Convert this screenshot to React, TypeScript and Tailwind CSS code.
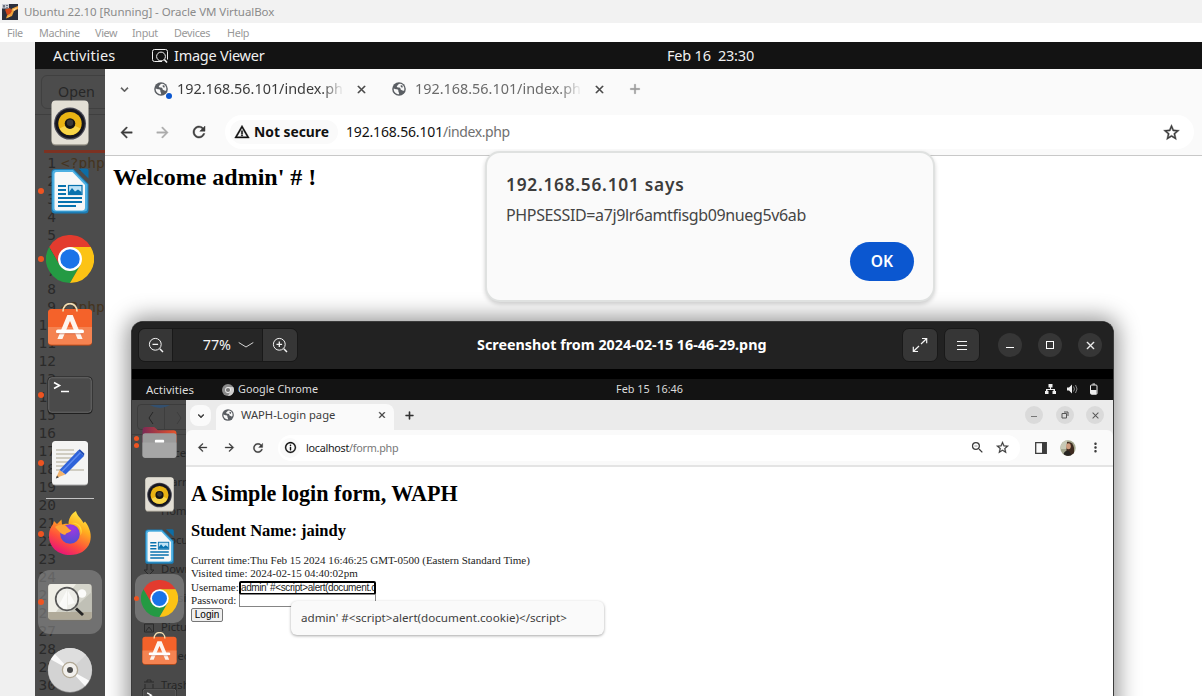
import React from 'react';
import {
  MdAdd,
  MdArrowBack,
  MdArrowForward,
  MdClose,
  MdExpandMore,
  MdInfoOutline,
  MdMoreVert,
  MdRefresh,
  MdStarBorder,
  MdWarningAmber,
  MdZoomOut,
} from 'react-icons/md';

type IconProps = { className?: string };

const SpeakerIcon = ({ className }: IconProps) => (
  <svg viewBox="0 0 48 48" className={className}>
    <rect x="5.6" y="2" width="36.8" height="44.5" rx="4" fill="#9b978c" />
    <rect x="5.6" y="1.6" width="36.8" height="43.6" rx="4" fill="#e3dfd5" />
    <circle cx="24" cy="24.6" r="16" fill="#4a4a56" />
    <circle cx="24" cy="24.6" r="14.8" fill="#16161f" />
    <circle cx="24" cy="24.6" r="11.7" fill="#e9b313" />
    <path d="M13.5 29.5a11.7 11.7 0 0 0 21 0L24 24.6z" fill="#f8d548" />
    <circle cx="24" cy="24.6" r="5.3" fill="#141414" />
    <circle cx="24" cy="23.8" r="3.2" fill="#383838" />
  </svg>
);

const WriterIcon = ({ className }: IconProps) => (
  <svg viewBox="0 0 48 48" className={className}>
    <path d="M9 2h18.500L42.500 17v26a3.500 3.500 0 0 1-3.500 3.500H9A3.500 3.500 0 0 1 5.500 43V5.500A3.500 3.500 0 0 1 9 2z" fill="#1c7db5" />
    <path d="M9.500 3H27l14.500 14.500V41a3.500 3.500 0 0 1-3.500 3.500H9.500A3.500 3.500 0 0 1 6.300 41V6.500A3.500 3.500 0 0 1 9.500 3z" fill="#4fb0e2" />
    <path d="M10.500 5h16L39 18v22.500a3 3 0 0 1-3 3H10.500a2 2 0 0 1-2-2V7a2 2 0 0 1 2-2z" fill="#f8f8f8" />
    <path d="M32.500 1.500h8a2 2 0 0 1 2 2v8z" fill="#0d6da5" />
    <path d="M12 19h8M12 23h8M12 27h8M12 31h24M12 35h24M12 39h18" stroke="#0872ae" strokeWidth="2" />
    <rect x="22.500" y="18.500" width="13.500" height="9" fill="#bfe2f5" stroke="#0872ae" strokeWidth="1.200" />
    <path d="M23 27v-2l3-4 3 3.500 3-2 3.500 2.500v2z" fill="#0872ae" />
  </svg>
);

const ChromeIcon = ({ className }: IconProps) => (
  <svg viewBox="0 0 48 48" className={className}>
    <path d="M24 12h20.800A24 24 0 0 0 3.200 12L13.600 30z" fill="#e33b2e" />
    <path d="M13.600 30 3.200 12A24 24 0 0 0 24 48l10.400-18z" fill="#249a43" />
    <path d="M34.400 30 24 48A24 24 0 0 0 44.800 12H24z" fill="#fcc314" />
    <circle cx="24" cy="24" r="12" fill="#fff" />
    <circle cx="24" cy="24" r="9.700" fill="#1a73e8" />
  </svg>
);

const SoftwareIcon = ({ className }: IconProps) => (
  <svg viewBox="0 0 48 48" className={className}>
    <rect x="2" y="6.500" width="44" height="36.200" rx="3.500" fill="#a94a20" />
    <rect x="2" y="6" width="44" height="35.500" rx="3.500" fill="#f4622a" />
    <path d="M2 24h44v14a3.500 3.500 0 0 1-3.500 3.500h-37A3.500 3.500 0 0 1 2 38z" fill="#f58351" />
    <path d="M17 8.500c0-10.500 14-10.500 14 0" fill="none" stroke="#f3ddb0" strokeWidth="1.700" />
    <path d="M21.300 12h5.400L36.600 36h-5L24 18 16.400 36h-5z" fill="#fdf4ee" />
    <rect x="10" y="26.500" width="28" height="3.800" rx="1.900" fill="#fff" />
    <path d="M11 30.800h26" stroke="#c9694a" strokeWidth=".7" />
  </svg>
);

const TerminalIcon = ({ className }: IconProps) => (
  <svg viewBox="0 0 48 48" className={className}>
    <rect x="1.500" y="5.500" width="45" height="37.500" rx="4.200" fill="#202020" />
    <rect x="2.700" y="6.700" width="42.600" height="34.600" rx="3" fill="#4a4a4a" stroke="#777" strokeWidth=".8" />
    <path d="M8 11.500l5.500 3-5.500 3" fill="none" stroke="#fff" strokeWidth="1.600" />
    <path d="M15 20.500h8" stroke="#fff" strokeWidth="1.500" />
  </svg>
);

const EditorIcon = ({ className }: IconProps) => (
  <svg viewBox="0 0 48 48" className={className}>
    <rect x="6" y="2.600" width="36" height="44" rx="3.500" fill="#aaa" />
    <rect x="6" y="2" width="36" height="43.500" rx="3.500" fill="#f4f4f3" />
    <path d="M10 11h18M10 15h21M10 19h19M10 23h15M10 27h12M10 31h28" stroke="#c3c0b2" strokeWidth="1.700" />
    <path d="M13.500 31 32 11.500l6 5.500-18.500 18.500z" fill="#2e62d9" />
    <path d="m32 11.500 1.800-1.300 4.500 4.300-.3 2.500z" fill="#204bb4" />
    <path d="m15.500 33 19-19.500" stroke="#5d8bf0" strokeWidth="1.500" />
    <path d="M13.500 31 10 39l9.500-3.500z" fill="#f2b46d" />
    <path d="m11 36.500-1.200 2.900 3-1z" fill="#444" />
  </svg>
);

const FirefoxIcon = ({ className }: IconProps) => (
  <svg viewBox="0 0 48 48" className={className}>
    <defs>
      <linearGradient id="fxBody" x1=".8" y1="0" x2=".3" y2="1">
        <stop offset="0" stopColor="#fff14a" />
        <stop offset=".35" stopColor="#ffae1f" />
        <stop offset=".7" stopColor="#ff4f3b" />
        <stop offset="1" stopColor="#e6127a" />
      </linearGradient>
      <radialGradient id="fxGlobe" cx=".6" cy=".2" r=".8">
        <stop offset="0" stopColor="#a436e0" />
        <stop offset="1" stopColor="#4f4fd0" />
      </radialGradient>
    </defs>
    <path d="M30 1c1 5 5 7 7.500 12l1.500-1.500c5 6 7 14 5 20.500-3 9-11 13-20 13C12 45 3 37 3 26c0-6 2-9 4-12l1-3 3 3 4.500-4.500.5 5c3-1 4-1 6.500-.5 0-5 2.500-10 7.500-13z" fill="url(#fxBody)" />
    <circle cx="24" cy="24" r="9.800" fill="url(#fxGlobe)" />
    <path d="M9 17c4-3 10-3 13 1l1.500 1.500c2 .5 2.500 1 0 2.500-1.500 1-3.500 1-4 2.500-3 1-6-2.500-10.500-7.500z" fill="#ffa436" />
    <path d="M24 13.500c6-1 12 3 10.500 12 4-7-2-15-10.500-12z" fill="#ffd93a" />
  </svg>
);

const ViewerIcon = ({ className }: IconProps) => (
  <svg viewBox="0 0 48 48" className={className}>
    <rect x="1.800" y="6.500" width="44.400" height="36.300" rx="3.500" fill="#77736a" />
    <rect x="2.300" y="6" width="43.400" height="35.600" rx="3" fill="#d4d4ca" />
    <path d="M5.500 6H30L10 34H2.300V9.200A3.200 3.200 0 0 1 5.500 6z" fill="#efeee6" />
    <path d="M45.700 14 24 34h21.700z" fill="#c0c0b6" />
    <path d="M2.300 34h43.400v4.400a3.200 3.200 0 0 1-3.200 3.200h-37a3.200 3.200 0 0 1-3.200-3.200z" fill="#b0aa99" />
    <circle cx="36" cy="15.500" r="4.300" fill="#fbfbf9" />
    <circle cx="21" cy="21" r="11.300" fill="#f0f0ec" fillOpacity=".85" stroke="#575757" strokeWidth="1.700" />
    <path d="M21 12 13 27q4 4 8 4zM22 13l7 12-7 2z" fill="#fff" opacity=".7" />
    <path d="m30 30.500 7 6.500" stroke="#262626" strokeWidth="3" />
  </svg>
);

const DiscIcon = ({ className }: IconProps) => (
  <svg viewBox="0 0 48 48" className={className}>
    <circle cx="24" cy="24.500" r="22.200" fill="#8b8b8b" />
    <circle cx="24" cy="24" r="22" fill="#d3d3d3" />
    <path d="M24 24 9 8A22 22 0 0 1 40 9z" fill="#dedede" />
    <path d="M24 24 5 13.500A22 22 0 0 1 9 8z" fill="#fafafa" />
    <path d="M24 24 43 34.500a22 22 0 0 1-4 5.500z" fill="#fafafa" />
    <circle cx="24" cy="24" r="7.600" fill="#f2f0ec" stroke="#b0a794" strokeWidth="1.300" />
    <circle cx="24" cy="24" r="3" fill="#4b4b4b" />
  </svg>
);

const FolderIcon = ({ className }: IconProps) => (
  <svg viewBox="0 0 48 48" className={className}>
    <defs>
      <linearGradient id="folderTop" x1="0" x2="1">
        <stop offset="0" stopColor="#7d2a55" />
        <stop offset="1" stopColor="#e8542a" />
      </linearGradient>
    </defs>
    <path d="M2 8a4 4 0 0 1 4-4h11l5 4h20a4 4 0 0 1 4 4v12H2z" fill="url(#folderTop)" />
    <rect x="2" y="12" width="44" height="32" rx="3.500" fill="#9b9b9b" />
    <path d="M2 24h44v16a3.500 3.500 0 0 1-3.500 3.500h-37A3.500 3.500 0 0 1 2 40z" fill="#a6a6a6" />
    <rect x="18" y="20.500" width="12" height="3.600" rx="1.200" fill="#fff" />
  </svg>
);

const GlobeIcon = ({ className }: IconProps) => (
  <svg viewBox="0 0 16 16" className={className}>
    <circle cx="8" cy="8" r="7.800" fill="#5a5e63" />
    <path d="M9.300 2c-2.500.2-2 1.600-3.100 2.100-1.200.6-.7 2.300.8 2.300 1.700 0 2.700.4 2.800 1.500.1 1.400 1.600.9 2.300 1.800.6.600 1.300.4 1.900-.3.700-3.200-.9-6.800-4.700-7.400z" fill="#f8f8f8" />
    <path d="M10 3.500l2.300.8-.4 2.200-1.900-.8z" fill="#5a5e63" />
    <path d="M2 7.300c1 .4 1.900.9 3.500 1 1.500.1 1.900.9 1.700 2.100-.1 1.100 1 1.300 1 3.500C4.500 14 1.600 10.900 2 7.300z" fill="#f8f8f8" />
  </svg>
);

const VirtualBoxIcon = ({ className }: IconProps) => (
  <svg viewBox="0 0 16 16" className={className}>
    <rect width="16" height="16" fill="#2b2f3c" />
    <path d="M0 0h7v4.500H0z" fill="#c9ccd4" />
    <path d="M1 1h2v2.500H1zM4 1h2v1H4zM4 3h2v.7H4z" fill="#70747f" />
    <path d="M16 2v3l-4 2-2 5-6 2.500 1-3 3-3 2-4z" fill="#f0a23a" />
    <path d="M3 5.500 8 4l2 3-2 3-3 1z" fill="#d2481c" />
    <path d="M11 5.500l4.500-2L12 7zM5 13.500l3.500-2L7 13z" fill="#fde2a8" />
  </svg>
);

const ZoomGlyph = ({ plus }: { plus?: boolean }) => (
  <svg viewBox="0 0 16 16" className="h-4 w-4" fill="none" stroke="#f4f4f4" strokeWidth="1">
    <circle cx="7.300" cy="7.300" r="5.900" />
    <path d="m11.800 11.800 3.200 3.200" strokeWidth="1.500" />
    <path d="M4.500 7.300h5.600" strokeWidth="1.300" />
    {plus && <path d="M7.300 4.500v5.600" strokeWidth="1.300" />}
  </svg>
);

const Dot = ({ className }: IconProps) => <span className={`absolute h-1.5 w-1.5 rounded-full bg-[#ee5421] ${className}`} />;

const dockTop = [
  { icon: SpeakerIcon, running: false },
  { icon: WriterIcon, running: true },
  { icon: ChromeIcon, running: true },
  { icon: SoftwareIcon, running: false },
  { icon: TerminalIcon, running: true },
  { icon: EditorIcon, running: true },
];

const dockBottom = [
  { icon: FirefoxIcon, running: true, active: false },
  { icon: ViewerIcon, running: true, active: true },
  { icon: DiscIcon, running: false, active: false },
];

const EditorBackdrop = () => (
  <div className="absolute inset-0 overflow-hidden bg-[#4c4c4c]">
    <div className="flex h-[46px] items-start border-b border-[#3f3f3f] pt-[6px] pl-[6px]">
      <div className="h-[34px] w-20 shrink-0 rounded-md border border-[#404040] pt-[5px] pl-4 text-[14.3px] leading-[22px] text-[#272727]">Open</div>
    </div>
    <div className="ml-[9px] h-[38px] border-b-3 border-[#7c3222]" />
    <div className="flex flex-col pt-[1px] font-['DejaVu_Sans_Mono',monospace] text-[14.500px] leading-[18px]">
      {Array.from({ length: 30 }, (_, i) => (
        <div key={i} className="flex">
          <span className="w-[21px] text-right text-[#2a2a2a]">{i + 1}</span>
          {(i === 0 || i === 8) && <span className="pl-[5px] text-[#453420]">&lt;?php</span>}
        </div>
      ))}
    </div>
  </div>
);

const Dock = () => (
  <div className="relative w-[70px] shrink-0">
    <EditorBackdrop />
    <div className="relative flex flex-col pt-5">
      {dockTop.map(({ icon: Icon, running }, i) => (
        <div key={i} className="relative flex h-[68px] shrink-0 items-center justify-center">
          {running && <Dot className="top-[31px] left-[3px]" />}
          <Icon className="h-12 w-12" />
        </div>
      ))}
      <div className="mt-[1px] mb-[1px] ml-[11px] h-px w-12 bg-[#c4c4c4]" />
      {dockBottom.map(({ icon: Icon, running, active }, i) => (
        <div key={i} className="relative flex h-[68px] shrink-0 items-center justify-center">
          <div className={`flex h-16 w-16 items-center justify-center rounded-xl ${active ? 'bg-[#8a8a8a]/60' : ''}`}>
            <Icon className="h-12 w-12" />
          </div>
          {running && <Dot className="top-[31px] left-[3px]" />}
        </div>
      ))}
    </div>
  </div>
);

const BrowserTab = ({ current }: { current?: boolean }) => (
  <div className="flex h-[40px] w-[238px] shrink-0 items-center">
    <div className="relative h-[14px] w-[14px]">
      <GlobeIcon className="h-[14px] w-[14px]" />
      {current && <span className="absolute top-[11px] left-[12px] h-1.5 w-1.5 rounded-full bg-[#0b57d0]" />}
    </div>
    <div
      className={`ml-[9px] w-[166px] overflow-hidden text-[14.4px] whitespace-nowrap [mask-image:linear-gradient(to_right,black_145px,transparent_167px)] ${current ? 'text-[#3c3c3c]' : 'text-[#6b6b6b]'}`}
    >
      192.168.56.101/index.php
    </div>
    <MdClose className="ml-[12px] h-[13px] w-[13px] stroke-[1] text-[#444]" />
  </div>
);

const AlertDialog = () => (
  <div className="absolute top-[82px] left-[380px] flex h-[151px] w-[450px] flex-col rounded-[15px] border-2 border-[#dfe1e0] bg-[#fafafa] px-[19px] pt-[19px] shadow-[0_2px_4px_rgba(0,0,0,0.18)]">
    <div className="text-[17.3px] leading-[25px] font-semibold tracking-[0.750px] whitespace-nowrap text-[#3c3c3c]">192.168.56.101 says</div>
    <div className="mt-[6px] text-[16px] leading-6 tracking-[-0.36px] whitespace-nowrap text-[#454545]">PHPSESSID=a7j9lr6amtfisgb09nueg5v6ab</div>
    <button className="mt-[15px] h-[39px] w-16 self-end rounded-full bg-[#0b57d0] text-[15.600px] font-semibold text-white">OK</button>
  </div>
);

const innerDock = [
  { icon: FolderIcon, dots: 2, active: false },
  { icon: SpeakerIcon, dots: 0, active: false },
  { icon: WriterIcon, dots: 0, active: false },
  { icon: ChromeIcon, dots: 1, active: true },
  { icon: SoftwareIcon, dots: 0, active: false },
  { icon: TerminalIcon, dots: 0, active: false },
];

const places = ['Recent', 'Starred', 'Home', 'Documents', 'Downloads', 'Music', 'Pictures', 'Videos', 'Trash'];

const InnerDock = () => (
  <div className="relative w-[54px] shrink-0 overflow-hidden bg-[#494949]">
    <div className="absolute inset-0">
      <div className="flex h-[35px] border-b border-[#3e3e3e] pt-1 pl-[5px]">
        <div className="flex h-[26px] w-16 shrink-0 items-center rounded border border-[#3c3c3c] text-[#2a2a2a]">
          <svg viewBox="0 0 50 24" className="h-6 w-[50px]" fill="none" stroke="currentColor">
            <path d="m15 7-4 6 4 6" stroke="#262626" />
            <path d="M26.500 0v24" stroke="#3e3e3e" />
            <path d="m39 7 4 6-4 6" stroke="#3e3e3e" />
            <path d="M12 0h20q-10 6-20 0" fill="#33506f" stroke="none" />
          </svg>
        </div>
      </div>
      <div className="flex flex-col pt-1">
        {places.map((place) => (
          <div key={place} className="flex h-[29px] items-center pl-[29px] text-[11.200px] text-[#262626]">
            {place}
          </div>
        ))}
      </div>
      <svg viewBox="0 0 12 130" className="absolute top-[164px] left-[11px] h-[130px] w-3" fill="none" stroke="#2b2b2b">
        <path d="M4 0v6H1l5 5 5-5H8V0" />
        <path d="M1.500 60h9v8h-9zM3 67l3-4 3 4" />
        <path d="M1 118h10M2 120v8h8v-8M4 118v-2h4v2" />
      </svg>
    </div>
    <div className="relative flex flex-col pt-[16px]">
      {innerDock.map(({ icon: Icon, dots, active }, i) => (
        <div key={i} className="relative flex h-[52px] shrink-0 items-center justify-center">
          <div className={`flex h-[49px] w-[49px] items-center justify-center rounded-[10px] ${active ? 'bg-[#868686]/70' : ''}`}>
            <Icon className="h-[37px] w-[37px]" />
          </div>
          {dots > 0 && (
            <div className="absolute left-[2px] flex h-full flex-col justify-center gap-[2px]">
              {Array.from({ length: dots }, (_, d) => (
                <span key={d} className="h-[5px] w-[5px] rounded-full bg-[#ee5421]" />
              ))}
            </div>
          )}
        </div>
      ))}
    </div>
  </div>
);

const InnerPage = () => (
  <div className="relative flex-1 bg-white pl-[5px] font-['Liberation_Serif',serif] text-[11.020px] leading-[13.400px] text-[#222]">
    <h1 className="pt-[13px] text-[22.100px] leading-[28px] font-bold whitespace-nowrap text-black">A Simple login form, WAPH</h1>
    <h2 className="mt-[13px] text-[16.5px] leading-5 font-bold whitespace-nowrap text-black">Student Name: jaindy</h2>
    <div className="mt-[13px] whitespace-nowrap">Current time:Thu Feb 15 2024 16:46:25 GMT-0500 (Eastern Standard Time)</div>
    <div className="whitespace-nowrap">Visited time: 2024-02-15 04:40:02pm</div>
    <div className="flex h-[13.400px] items-center">
      <span className="w-[48px]">Username:</span>
      <div className="h-[14px] w-[137px] overflow-hidden rounded-[2px] border-2 border-black bg-white font-['Liberation_Sans',sans-serif] text-[10px] leading-[10px] tracking-[-0.400px] whitespace-nowrap text-[#222]">
        admin' #&lt;script&gt;alert(document.cookie)
      </div>
    </div>
    <div className="flex h-[13.400px] items-center">
      <span className="w-[48px]">Password:</span>
      <div className="h-[13px] w-[137px] border border-[#858585] bg-white" />
    </div>
    <button className="block h-[14px] w-[32px] rounded-[2px] border border-[#767676] bg-[#efefef] font-['Liberation_Sans',sans-serif] text-[10px] leading-3 text-black">Login</button>
    <div className="absolute top-[134px] left-[105px] flex h-[34px] w-[313px] items-center rounded-[6px] bg-[#fafafa] pl-[10px] font-['Noto_Sans',sans-serif] text-[11.650px] whitespace-nowrap text-[#3f3f3f] shadow-[0_1px_3px_rgba(0,0,0,0.35)]">
      admin' #&lt;script&gt;alert(document.cookie)&lt;/script&gt;
    </div>
  </div>
);

const InnerBrowser = () => (
  <div className="flex flex-1 flex-col bg-[#ebebeb]">
    <div className="flex h-[30px] shrink-0 items-end">
      <div className="mb-1 ml-[4px] flex h-[21px] w-[21px] items-center justify-center rounded-[8px] bg-[#fafafa]">
        <MdExpandMore className="h-[12px] w-[12px] stroke-[1] text-[#333]" />
      </div>
      <div className="ml-[5px] flex h-[26px] w-[178px] items-center rounded-t-lg bg-[#fafafa] pb-1">
        <GlobeIcon className="ml-[6px] h-[12px] w-[12px]" />
        <span className="ml-[7px] text-[11.200px] whitespace-nowrap text-[#3c3c3c]">WAPH-Login page</span>
        <MdClose className="mr-[7px] ml-auto h-[10px] w-[10px] stroke-[1] text-[#333]" />
      </div>
      <MdAdd className="mb-2 ml-[9px] h-[13px] w-[13px] stroke-[1] text-[#333]" />
      <div className="mr-[9px] mb-[6px] ml-auto flex gap-[12.500px] text-[#555]">
        <span className="flex h-[18px] w-[18px] items-end justify-center rounded-full bg-[#dadada] pb-[7px]">
          <span className="h-px w-[6px] bg-[#777]" />
        </span>
        <span className="flex h-[18px] w-[18px] items-center justify-center rounded-full bg-[#dadada]">
          <svg viewBox="0 0 8 8" className="h-2 w-2" fill="none" stroke="currentColor">
            <path d="M1 2.500h4.500V7H1zM3 1h4v4" />
          </svg>
        </span>
        <span className="flex h-[18px] w-[18px] items-center justify-center rounded-full bg-[#dadada]">
          <MdClose className="h-[11px] w-[11px]" />
        </span>
      </div>
    </div>
    <div className="flex h-[35px] shrink-0 items-center rounded-t-md bg-[#fafafa] text-[#3c3c3c]">
      <MdArrowBack className="ml-[10px] h-[13px] w-[13px] stroke-[0.6]" />
      <MdArrowForward className="ml-[14px] h-[13px] w-[13px] stroke-[0.6]" />
      <MdRefresh className="ml-[15px] h-[14px] w-[14px] stroke-[0.6]" />
      <div className="ml-[13px] flex h-[26px] w-[742px] items-center rounded-full bg-white">
        <span className="ml-[2px] flex h-[20px] w-[20px] items-center justify-center rounded-full bg-[#fafafa]">
          <MdInfoOutline className="h-[13px] w-[13px] stroke-[0.6] text-[#111]" />
        </span>
        <span className="ml-[6px] pt-px text-[10.800px] tracking-[-0.280px] whitespace-nowrap text-[#222]">
          localhost<span className="text-[#777]">/form.php</span>
        </span>
        <MdZoomOut className="ml-auto h-[15px] w-[15px]" />
        <MdStarBorder className="mr-[10px] ml-[10px] h-[15px] w-[15px] stroke-[0.4]" />
      </div>
      <svg viewBox="0 0 12 12" className="ml-[15px] h-3 w-3">
        <path d="M.7.7h10.600v10.600H.7z" fill="none" stroke="#3c3c3c" strokeWidth="1.300" />
        <path d="M7 1h4v10H7z" fill="#3c3c3c" />
      </svg>
      <svg viewBox="0 0 16 16" className="ml-[13px] h-4 w-4">
        <clipPath id="avatarClip">
          <circle cx="8" cy="8" r="7.700" />
        </clipPath>
        <g clipPath="url(#avatarClip)">
          <path d="M0 0h16v16H0z" fill="#a3a68d" />
          <path d="M0 0h7v9H0z" fill="#c7c9b6" />
          <path d="M7 2q6-1 7 6v8H6z" fill="#3d2a1f" />
          <ellipse cx="8.500" cy="6.300" rx="2.300" ry="3" fill="#cf9c7d" />
          <path d="M3 16q1-6 6-5l3 5z" fill="#262521" />
        </g>
      </svg>
      <MdMoreVert className="ml-[12px] h-[15px] w-[15px]" />
    </div>
    <div className="h-[2px] shrink-0 bg-[#e4e4e4]" />
    <InnerPage />
  </div>
);

const ImageWindow = () => (
  <div className="absolute top-[252px] left-[26px] flex h-[460px] w-[983px] flex-col overflow-hidden rounded-t-xl border-x border-t border-[#3b3b3b] bg-black shadow-[0_0_22px_4px_rgba(0,0,0,0.42)]">
    <div className="flex h-[47px] shrink-0 items-center bg-[#222] pb-px text-[#f4f4f4]">
      <div className="ml-[6px] flex h-[34px] w-[160px] items-stretch rounded-[7px] border border-[#191919] bg-[#262626]">
        <div className="flex w-[34px] items-center justify-center rounded-l-md border-r border-[#191919] bg-[#363636]">
          <ZoomGlyph />
        </div>
        <div className="flex flex-1 items-center justify-end pr-[8px]">
          <span className="text-[14.300px]">77%</span>
          <svg viewBox="0 0 16 8" className="ml-[7px] h-2 w-4" fill="none" stroke="#d4d4d4">
            <path d="m.7 1.500 7.300 4.500 7.300-4.500" />
          </svg>
        </div>
        <div className="flex w-[35px] items-center justify-center rounded-r-md border-l border-[#191919] bg-[#363636]">
          <ZoomGlyph plus />
        </div>
      </div>
      <div className="flex-1 pl-[179px] text-[14.320px] font-bold whitespace-nowrap text-white">Screenshot from 2024-02-15 16-46-29.png</div>
      <div className="flex items-center">
        <div className="flex h-[34px] w-9 items-center justify-center rounded-[7px] border border-[#191919] bg-[#363636]">
          <svg viewBox="0 0 16 16" className="h-4 w-4" fill="none" stroke="#f4f4f4" strokeWidth="1.200">
            <path d="M10 1.500h4.700v4.700M14.500 1.700 9 7M6 14.500H1.300V9.800M1.500 14.300 7 9" />
          </svg>
        </div>
        <div className="ml-[6px] flex h-[34px] w-9 items-center justify-center rounded-[7px] border border-[#191919] bg-[#363636]">
          <div className="flex flex-col gap-[3px]">
            <span className="h-px w-[10px] bg-[#f4f4f4]" />
            <span className="h-px w-[10px] bg-[#f4f4f4]" />
            <span className="h-px w-[10px] bg-[#f4f4f4]" />
          </div>
        </div>
        <div className="mr-[11px] ml-[18px] flex gap-4">
          <span className="flex h-6 w-6 items-end justify-center rounded-full bg-[#363636] pb-[9px]">
            <span className="h-px w-2 bg-white" />
          </span>
          <span className="flex h-6 w-6 items-center justify-center rounded-full bg-[#363636]">
            <span className="h-2 w-2 border border-white" />
          </span>
          <span className="flex h-6 w-6 items-center justify-center rounded-full bg-[#363636]">
            <MdClose className="h-[13px] w-[13px] stroke-[0.6]" />
          </span>
        </div>
      </div>
    </div>
    <div className="h-[10px] shrink-0 bg-black" />
    <div className="flex h-[21px] shrink-0 items-center bg-[#131313] text-[#dcdcdc]">
      <span className="ml-[14px] w-[76px] text-[11.500px]">Activities</span>
      <svg viewBox="0 0 12 12" className="h-3 w-3">
        <circle cx="6" cy="6" r="6" fill="#8b8b8b" />
        <path d="M6 3h5.200A6 6 0 0 1 6 12l2.500-4.500z" fill="#cfcfcf" />
        <circle cx="6" cy="6" r="2.900" fill="#eee" />
        <circle cx="6" cy="6" r="2.100" fill="#777" />
      </svg>
      <span className="ml-[4px] w-[378px] text-[10.850px] whitespace-nowrap">Google Chrome</span>
      <span className="text-[10.850px] whitespace-pre">Feb 15  16:46</span>
      <svg viewBox="0 0 56 12" className="mr-[13px] mb-px ml-auto h-3 w-14" fill="#eee">
        <path d="M4.500 1h4v3.500H7V6h4v2h1v3H8.500V8h1V7h-6v1h1v3H1V8h1V6h4V4.500H4.500z" />
        <path d="M23 4.500h2l3-3v9l-3-3h-2z" />
        <path d="M29.500 3.500q2 2.500 0 5M31.500 2q3 4 0 8" fill="none" stroke="#888" />
        <rect x="46.500" y="2" width="6.500" height="9.300" rx="1" fill="none" stroke="#eee" />
        <path d="M48.500 .5h2.500v1h-2.500zM47 7h5.500v4H47z" />
      </svg>
    </div>
    <div className="flex min-h-0 flex-1">
      <InnerDock />
      <InnerBrowser />
    </div>
  </div>
);

const Browser = () => (
  <div className="relative flex min-w-0 flex-1 flex-col overflow-hidden bg-white">
    <div className="flex h-[40px] shrink-0 items-center bg-[#fafafa]">
      <MdExpandMore className="ml-[12px] h-[15px] w-[15px] stroke-[0.6] text-[#555]" />
      <div className="ml-[22px] flex">
        <BrowserTab current />
        <BrowserTab />
      </div>
      <MdAdd className="ml-[-3px] h-4 w-4 stroke-[0.6] text-[#999]" />
    </div>
    <div className="flex h-[47px] shrink-0 items-center border-b border-[#c8c8c8] bg-[#fafafa] text-[#3c3c3c]">
      <MdArrowBack className="ml-[13px] h-[17px] w-[17px] stroke-[0.6]" />
      <MdArrowForward className="ml-[19px] h-[17px] w-[17px] stroke-[0.6] text-[#ababab]" />
      <MdRefresh className="ml-[19px] h-[18px] w-[18px] stroke-[0.6]" />
      <div className="mr-2 ml-[17px] flex h-[34px] flex-1 items-center rounded-full bg-white">
        <div className="ml-[5px] flex h-6 w-[108px] items-center rounded-full bg-[#fafafa] text-[#111]">
          <MdWarningAmber className="ml-[4px] h-4 w-4 stroke-[0.6]" />
          <span className="ml-[4px] text-[13.850px] font-bold whitespace-nowrap">Not secure</span>
        </div>
        <span className="ml-[8px] pb-px text-[14px] tracking-[-0.170px] whitespace-nowrap text-[#111]">
          192.168.56.101<span className="tracking-[-0.400px] text-[#707070]">/index.php</span>
        </span>
        <MdStarBorder className="mr-[13px] ml-auto h-[19px] w-[19px] stroke-[0.5]" />
      </div>
    </div>
    <h1 className="pt-[7px] pl-[8px] font-['Liberation_Serif',serif] text-[24px] leading-[28px] font-bold text-black">Welcome admin' # !</h1>
    <ImageWindow />
    <AlertDialog />
  </div>
);

export default function App() {
  return (
    <div className="flex h-[696px] w-[1202px] flex-col overflow-hidden bg-white font-['Noto_Sans',sans-serif] [&_path[d^='M0_0h']]:stroke-none">
      <div className="flex h-[23px] shrink-0 items-center bg-[#f2f2f2]">
        <VirtualBoxIcon className="ml-[2px] h-4 w-4" />
        <span className="ml-[6px] text-[11.500px] tracking-[-0.060px] text-[#8b8b8b]">Ubuntu 22.10 [Running] - Oracle VM VirtualBox</span>
      </div>
      <div className="flex h-[19px] shrink-0 items-center bg-white pt-px pl-[7px] text-[10.800px] tracking-[-0.350px] text-[#999]">
        <span className="w-8">File</span>
        <span className="w-14">Machine</span>
        <span className="w-[37px]">View</span>
        <span className="w-[42px]">Input</span>
        <span className="w-[53px]">Devices</span>
        <span>Help</span>
      </div>
      <div className="flex min-h-0 flex-1">
        <div className="w-[35px] shrink-0 bg-[#f0f0f0]" />
        <div className="flex min-w-0 flex-1 flex-col">
          <div className="flex h-[27px] shrink-0 items-center bg-[#131313] text-[14.500px] text-[#f0f0f0]">
            <span className="ml-[18px] w-[99px] tracking-[0.200px]">Activities</span>
            <svg viewBox="0 0 16 14" className="h-[14px] w-4" fill="none" stroke="#f0f0f0">
              <path d="M10 12.500H2.500a2 2 0 0 1-2-2V2.500a2 2 0 0 1 2-2h11a2 2 0 0 1 2 2v8" />
              <circle cx="9" cy="7.500" r="4.400" />
              <path d="m12.300 10.500 2.700 3" strokeWidth="1.600" />
            </svg>
            <span className="ml-[6px] w-[493px] tracking-[-0.250px]">Image Viewer</span>
            <span className="tracking-[-0.200px] whitespace-pre">Feb 16  23:30</span>
          </div>
          <div className="flex min-h-0 flex-1">
            <Dock />
            <Browser />
          </div>
        </div>
      </div>
    </div>
  );
}
